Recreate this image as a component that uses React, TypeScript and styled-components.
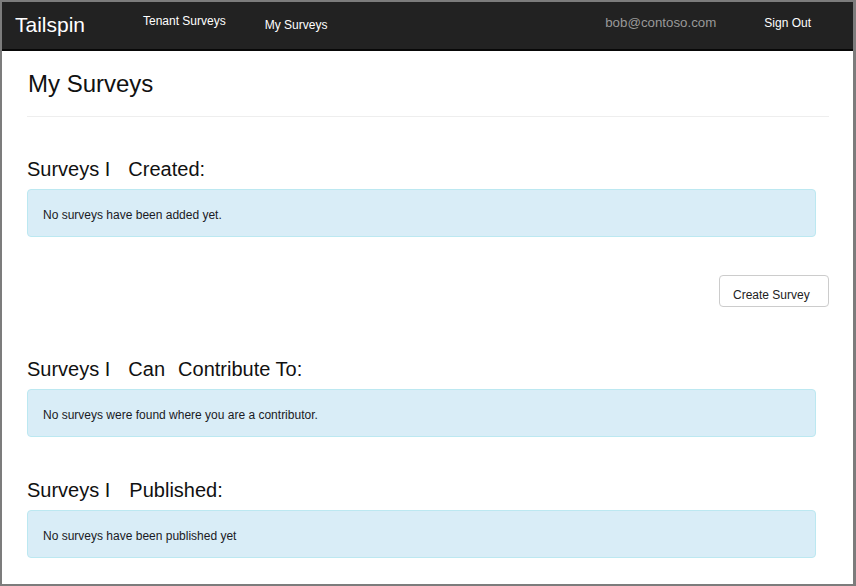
import { type FC, ReactNode } from "react";
import styled, { createGlobalStyle } from "styled-components";

const GlobalStyle = createGlobalStyle`
  html, body {
    margin: 0;
    padding: 0;
    background: #fff;
  }
  body {
    font-family: "Liberation Sans", Arial, sans-serif;
  }
  * {
    box-sizing: border-box;
  }
`;

const Frame = styled.div`
  width: 856px;
  height: 586px;
  border: 2px solid #7c7c7c;
  border-right-width: 3px;
  background: #fff;
  overflow: hidden;
`;

const Navbar = styled.nav`
  height: 49px;
  background: #222;
  border-bottom: 2px solid #080808;
  display: flex;
  align-items: flex-start;
  padding-right: 42px;
`;

const Brand = styled.div`
  width: 141px;
  padding: 11px 0 0 13px;
  font-size: 21px;
  color: #fff;
`;

const NavItem = styled.a<{ $top: number; $size?: number; $muted?: boolean }>`
  padding-top: ${(p) => p.$top}px;
  font-size: ${(p) => p.$size ?? 12}px;
  color: ${(p) => (p.$muted ? "#999" : "#fff")};
  text-decoration: none;
  white-space: nowrap;
`;

const NavGroup = styled.div<{ $gap: number }>`
  display: flex;
  align-items: flex-start;
  gap: ${(p) => p.$gap}px;
`;

const Spacer = styled.div`
  flex: 1;
`;

const Main = styled.main`
  padding: 0 24px 0 25px;
`;

const PageTitle = styled.h1`
  margin: 19px 0 0 1px;
  font-size: 24px;
  font-weight: normal;
  color: #111;
`;

const Divider = styled.hr`
  margin: 18px 0 0;
  border: 0;
  border-top: 1px solid #eee;
`;

const SectionTitle = styled.h2<{ $top: number }>`
  margin: ${(p) => p.$top}px 0 8px;
  font-size: 20px;
  font-weight: normal;
  color: #111;
  white-space: nowrap;
`;

const Gap = styled.span<{ $w: number }>`
  display: inline-block;
  width: ${(p) => p.$w}px;
`;

const Alert = styled.div`
  height: 48px;
  margin-right: 13px;
  padding: 18px 15px 0;
  background: #d9edf7;
  border: 1px solid #bce8f1;
  border-radius: 4px;
  font-size: 12px;
  color: #1a1a24;
`;

const Actions = styled.div`
  display: flex;
  justify-content: flex-end;
  margin-top: 38px;
`;

const Button = styled.button`
  width: 110px;
  height: 32px;
  padding: 8px 0 0 13px;
  text-align: left;
  background: #fff;
  border: 1px solid #ccc;
  border-radius: 4px;
  font-family: "Liberation Sans", Arial, sans-serif;
  font-size: 12px;
  color: #222;
  align-self: flex-start;
  line-height: normal;
`;

const Section: FC<{ top: number; title: ReactNode; message: string }> = ({
  top,
  title,
  message,
}) => (
  <section>
    <SectionTitle $top={top}>{title}</SectionTitle>
    <Alert>{message}</Alert>
  </section>
);

export default function App() {
  return (
    <>
      <GlobalStyle />
      <Frame>
        <Navbar>
          <Brand>Tailspin</Brand>
          <NavGroup $gap={39}>
            <NavItem $top={12}>Tenant Surveys</NavItem>
            <NavItem $top={16}>My Surveys</NavItem>
          </NavGroup>
          <Spacer />
          <NavGroup $gap={48}>
            <NavItem $top={13} $size={13.3} $muted>
              bob@contoso.com
            </NavItem>
            <NavItem $top={14}>Sign Out</NavItem>
          </NavGroup>
        </Navbar>
        <Main>
          <PageTitle>My Surveys</PageTitle>
          <Divider />
          <Section
            top={41}
            title={
              <>
                Surveys I<Gap $w={18} />
                Created:
              </>
            }
            message="No surveys have been added yet."
          />
          <Actions>
            <Button>Create Survey</Button>
          </Actions>
          <Section
            top={51}
            title={
              <>
                Surveys I<Gap $w={18} />
                Can<Gap $w={13} />
                Contribute To:
              </>
            }
            message="No surveys were found where you are a contributor."
          />
          <Section
            top={42}
            title={
              <>
                Surveys I<Gap $w={19} />
                Published:
              </>
            }
            message="No surveys have been published yet"
          />
        </Main>
      </Frame>
    </>
  );
}
